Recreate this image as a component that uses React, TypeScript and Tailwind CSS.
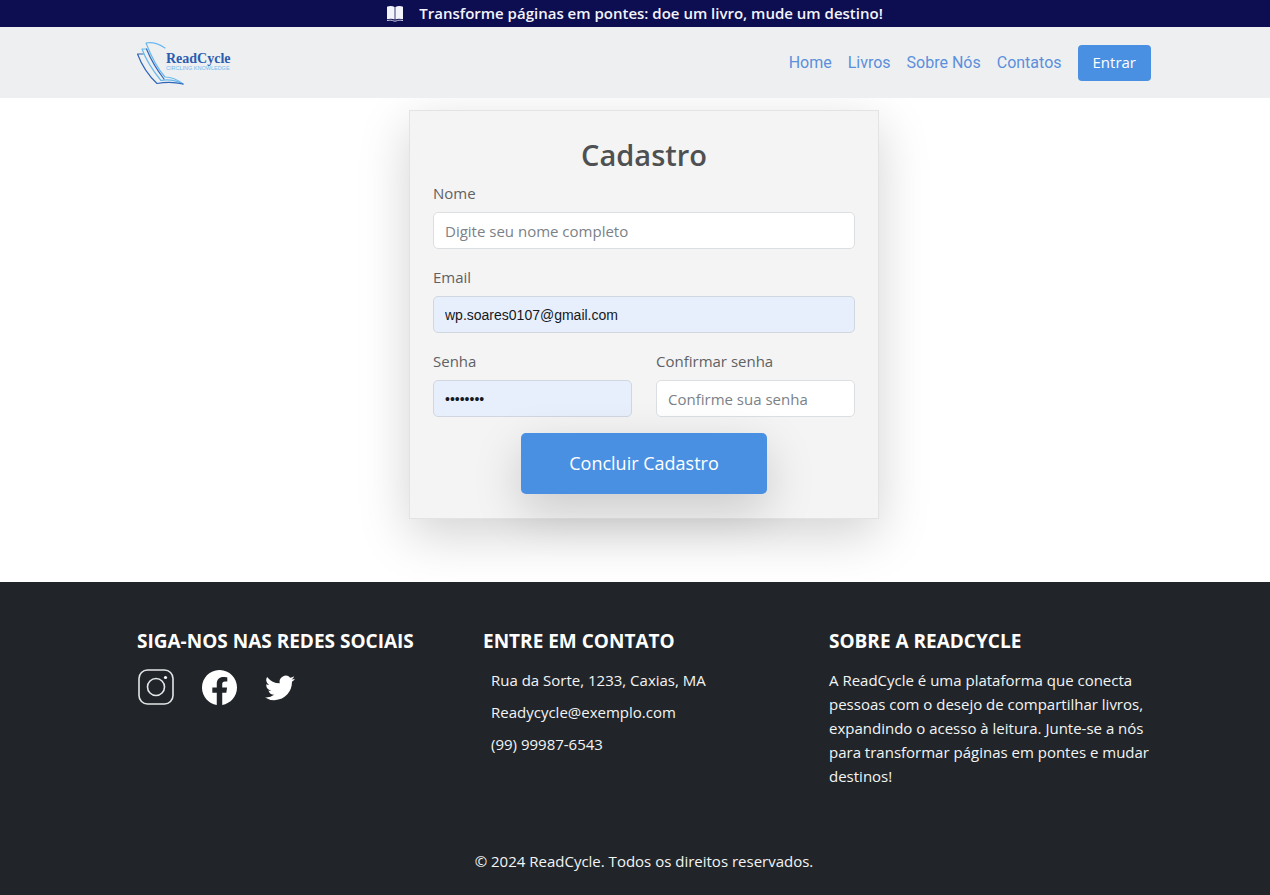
import React from "react";
import { BsFacebook, BsTwitter } from "react-icons/bs";

const navLinks = ["Home", "Livros", "Sobre Nós", "Contatos"];

function BookIcon() {
  return (
    <svg viewBox="0 0 16 16" className="h-4 w-4" aria-hidden="true">
      <path fill="#f3f4fb" d="M0 .8C2.6-.2 5.400-.1 7.600 1v12.400C5.400 12.400 2.600 12.400 0 13.300zM16 .8C13.400-.2 10.600-.1 8.400 1v12.400c2.200-1 5-1 7.600-.1z" />
      <path fill="none" stroke="#c9cbe4" strokeWidth="1" d="M0 14.600c2.800-.7 5.200-.6 7 .5h2c1.800-1.100 4.200-1.200 7-.5" />
    </svg>
  );
}

function Logo() {
  return (
    <svg viewBox="0 0 100 52" className="h-[52px] w-[100px]" role="img" aria-label="ReadCycle">
      <g fill="none" strokeWidth="1.200" strokeLinejoin="round" strokeLinecap="round">
        <path stroke="#69b9ee" d="M31 11C25 7 18 5 12 6C17 19 23 31 31 40C38 40 44 43 49 47" />
        <path stroke="#69b9ee" d="M12.500 12L8 12C12 23 20 35 27 43.500C35 42 42 43.500 49 47" />
        <path stroke="#2f66b8" d="M9 17L3.500 17C8 29 15 39 23 46.500C33 44.500 41 45 49 47" />
        <path stroke="#2f66b8" d="M12.500 12C17 23 23 33 30 42" />
      </g>
      <text x="32" y="26" fontSize="14" fontWeight="700" fill="#2a5cb0" fontFamily="Liberation Serif, serif">ReadCycle</text>
      <text x="32" y="33" fontSize="5.500" fill="#6dbcf0" fontFamily="Liberation Sans, sans-serif">CIRCLING KNOWLEDGE</text>
    </svg>
  );
}

function InstagramIcon() {
  return (
    <svg viewBox="0 0 36 36" className="h-9 w-9" fill="none" stroke="#e4e5e6" strokeWidth="1.600" aria-hidden="true">
      <rect x="1" y="1" width="34" height="34" rx="8.500" />
      <circle cx="18" cy="18" r="8.500" />
      <circle cx="27.500" cy="8.500" r="1.600" fill="#fff" stroke="none" />
    </svg>
  );
}

type FieldProps = React.InputHTMLAttributes<HTMLInputElement> & { label: string; id: string; filled?: boolean };

function Field({ label, id, filled, ...props }: FieldProps) {
  return (
    <div className="min-w-0">
      <label htmlFor={id} className="mb-[7px] block leading-6 text-[#5f6163]">{label}</label>
      <input
        id={id}
        {...props}
        className={
          filled
            ? "block h-[37px] w-full rounded-[5px] border border-[#d0d7e0] bg-[#e7effd] px-[11px] font-['Liberation_Sans',sans-serif] text-[14px] text-[#15181c]"
            : "block h-[37px] w-full rounded-[5px] border border-[#dcdfe2] bg-white px-[11px] text-[15px] text-[#212529] placeholder:text-[#7b8187]"
        }
      />
    </div>
  );
}

export default function App() {
  return (
    <div className="flex min-h-screen flex-col bg-white font-['Open_Sans','Noto_Sans',sans-serif] text-[15px] text-[#212529]">
      <div className="flex h-[27px] items-center justify-center gap-4 bg-[#0d0d51] font-semibold text-[#f3f4fb]">
        <BookIcon />
        <p>Transforme páginas em pontes: doe um livro, mude um destino!</p>
      </div>

      <header className="relative z-10 bg-[#eeeff1] pl-[18px]">
        <div className="mx-auto flex h-[71px] max-w-[1020px] items-center justify-between px-[3px]">
          <a href="#" className="-ml-[3px]"><Logo /></a>
          <nav className="flex items-center gap-4 font-[Roboto,sans-serif] text-[16px] text-[#5b8fdb]">
            {navLinks.map((link) => (
              <a key={link} href="#">{link}</a>
            ))}
            <button type="button" className="h-9 rounded-[4px] bg-[#4a90e2] px-[15px] font-['Open_Sans',sans-serif] text-[15px] text-white">
              Entrar
            </button>
          </nav>
        </div>
      </header>

      <main className="pt-3 pb-[63px] pl-[18px]">
        <form className="mx-auto max-w-[470px] border border-[#e3e3e4] bg-[#f4f4f4] px-[23px] pt-6 pb-6 shadow-[0_16px_48px_rgba(0,0,0,0.175)]" onSubmit={(e) => e.preventDefault()}>
          <h1 className="text-center text-[29px] leading-10 font-semibold text-[#4e5052]">Cadastro</h1>
          <div className="mt-[6px] grid grid-cols-1 gap-4">
            <Field id="nome" label="Nome" type="text" placeholder="Digite seu nome completo" />
            <Field id="email" label="Email" type="email" filled defaultValue="wp.soares0107@gmail.com" />
            <div className="grid grid-cols-2 gap-6">
              <Field id="senha" label="Senha" type="password" filled defaultValue="abcdefgh" />
              <Field id="confirmar" label="Confirmar senha" type="password" placeholder="Confirme sua senha" />
            </div>
            <button type="submit" className="mx-auto h-[61px] rounded-[5px] bg-[#4a90e2] px-12 text-[18px] text-white shadow-[0_16px_48px_rgba(0,0,0,0.175)]">
              Concluir Cadastro
            </button>
          </div>
        </form>
      </main>

      <footer className="relative grow bg-[#212529] pt-[47px] pl-[18px] text-[#f3f4f5]">
        <div className="mx-auto grid max-w-[1014px] grid-cols-3 gap-6">
          <section>
            <h2 className="text-[19px] leading-6 font-bold whitespace-nowrap text-white">SIGA-NOS NAS REDES SOCIAIS</h2>
            <div className="mt-4 flex items-center gap-7 pl-px text-white">
              <a href="#" aria-label="Instagram"><InstagramIcon /></a>
              <a href="#" aria-label="Facebook"><BsFacebook className="h-[35px] w-[35px]" /></a>
              <a href="#" aria-label="Twitter"><BsTwitter className="h-[30px] w-[30px]" /></a>
            </div>
          </section>
          <section>
            <h2 className="text-[19px] leading-6 font-bold whitespace-nowrap text-white">ENTRE EM CONTATO</h2>
            <ul className="mt-[15px] flex flex-col gap-2 pl-2 leading-6">
              <li>Rua da Sorte, 1233, Caxias, MA</li>
              <li>Readycycle@exemplo.com</li>
              <li>(99) 99987-6543</li>
            </ul>
          </section>
          <section>
            <h2 className="text-[19px] leading-6 font-bold whitespace-nowrap text-white">SOBRE A READCYCLE</h2>
            <p className="mt-[15px] leading-6">
              A ReadCycle é uma plataforma que conecta pessoas com o desejo de compartilhar livros, expandindo o acesso à leitura. Junte-se a nós para transformar páginas em pontes e mudar destinos!
            </p>
          </section>
        </div>
        <p className="mt-[61px] pb-5 text-center leading-6">© 2024 ReadCycle. Todos os direitos reservados.</p>
      </footer>
    </div>
  );
}
